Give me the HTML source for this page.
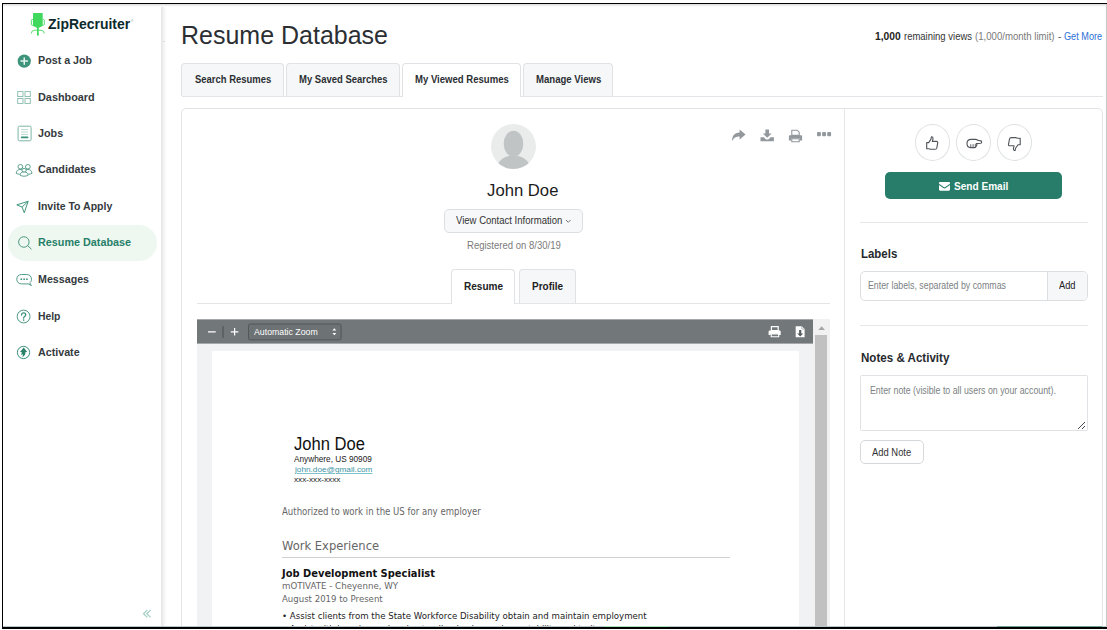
<!DOCTYPE html>
<html lang="en">
<head>
<meta charset="utf-8">
<title>Resume Database - ZipRecruiter</title>
<style>
*{box-sizing:border-box;margin:0;padding:0}
html,body{width:1107px;height:630px;overflow:hidden;background:#fff}
body{position:relative;font-family:"Liberation Sans",sans-serif;color:#333;font-size:11px}
.abs{position:absolute}
.t{position:absolute;white-space:nowrap;line-height:normal;transform-origin:0 0}
/* frame */
#f-top{left:2px;top:3px;width:1105px;height:1px;background:#000}
#f-top2{left:3px;top:4px;width:1103px;height:3px;background:linear-gradient(#d6d6d6,#f1f1f1 55%,#fff)}
#f-left{left:2px;top:3px;width:1px;height:626px;background:#000}
#f-bot{left:2px;top:627px;width:1105px;height:2px;background:#000}
#f-bot0{left:3px;top:626px;width:1103px;height:1px;background:#b9c6cb}
#f-right{left:1105.5px;top:4px;width:1.5px;height:623px;background:#c9c9c9}
#w-bot{left:0;top:629px;width:1107px;height:1px;background:#fff}
#w-top{left:0;top:0;width:1107px;height:3px;background:#fff}
#w-left{left:0;top:0;width:2px;height:630px;background:#fff}
#grn{left:604px;top:626px;width:65px;height:1px;background:#a9e3b8}
#chat{left:997px;top:626px;width:104.5px;height:1px;background:#6ea394}
/* sidebar */
#sb-shadow{left:161px;top:6px;width:6px;height:621px;background:linear-gradient(90deg,#e4e5e7,#f1f1f2 40%,#fafafa 70%,#fff)}
.ico{position:absolute;left:16.5px;width:15px;height:15px}
#pill{left:7.5px;top:224.7px;width:149.5px;height:36.3px;border-radius:18.2px;background:#eef8f1}
/* tabs */
.tab{position:absolute;top:63px;height:33px;border:1px solid #e0e2e5;border-bottom:none;border-radius:4px 4px 0 0;background:#f6f7f8}
.tab.on{background:#fff;height:34px}
#tabline{left:181.5px;top:96px;width:921.5px;height:1px;background:#e3e5e8}
/* card */
#card{left:181.2px;top:108.2px;width:921.8px;height:540px;border:1px solid #e1e3e6;border-radius:5px;background:#fff}
#vdiv{left:844px;top:109px;width:1px;height:520px;background:#e5e6e8}
/* profile */
#avatar{left:490.8px;top:124px;width:45px;height:45px;border-radius:50%;background:#eaecec;overflow:hidden}
#vci{left:444px;top:209px;width:138.7px;height:23.8px;border:1px solid #dcdfe2;border-radius:5px;background:#f7f8f9}
.rtab{position:absolute;top:269px;height:34px;border:1px solid #e0e2e5;border-bottom:none;border-radius:4px 4px 0 0;background:#f6f7f8}
.rtab.on{background:#fff;height:35px}
#rtabline{left:197px;top:303px;width:633px;height:1px;background:#e4e5e7}
/* pdf */
#pdf{left:197.4px;top:319px;width:632.6px;height:320px;background:#f1f2f4;overflow:hidden}
#ptool{left:0;top:0;width:616px;height:24px;background:#72777a}
#psel{left:51px;top:4.4px;width:93.6px;height:17px;border:1px solid #54595c;border-radius:2px;background:#6c7174}
#page{left:14.6px;top:32px;width:586.6px;height:300px;background:#fff}
#strack{left:616px;top:0;width:16.6px;height:320px;background:#f1f1f1}
#sthumb{left:617.9px;top:15.9px;width:11.6px;height:310px;background:#c1c1c1}
#rule{left:84.3px;top:238px;width:448.6px;height:1px;background:#d0d0d0}
/* right panel */
.circ{position:absolute;top:124.3px;width:35.4px;height:36.6px;border:1px solid #dfe2e4;border-radius:50%;background:#fff}
#send{left:885.3px;top:171.7px;width:176.7px;height:27.5px;border-radius:5px;background:#277d69}
.hr{position:absolute;left:859.7px;width:228px;height:1px;background:#e5e7ea}
#lblin{left:859.7px;top:271px;width:228px;height:30.2px;border:1px solid #dcdfe2;border-radius:5px;background:#fff;overflow:hidden}
#lbladd{left:186.5px;top:0;width:41px;height:30px;border-left:1px solid #dcdfe2;background:#f6f7f8}
#note{left:859.7px;top:375.2px;width:228px;height:56px;border:1px solid #e0e2e5;border-radius:1.5px;background:#fff}
#addnote{left:860px;top:440px;width:64px;height:23.6px;border:1px solid #d6d9dc;border-radius:5px;background:#fff}
</style>
</head>
<body>
<!-- sidebar -->
<div class="abs" id="sb-shadow"></div>
<div class="abs" id="pill"></div>
<div class="abs" style="left:162px;top:41px;width:3px;height:1px;background:#dddee1"></div>
<svg class="abs" style="left:29px;top:11px" width="18" height="27" viewBox="29 11 18 27">
  <g fill="#41d95d" stroke="none">
    <rect x="33" y="13" width="9.7" height="13.2" rx="0.6"/>
    <path d="M33 25.600h9.700l-3.500 2.200h-2.700z"/>
    <rect x="37" y="26" width="1.700" height="9"/>
    <circle cx="37.850" cy="34.800" r="1"/>
  </g>
  <g fill="none" stroke="#41d95d">
    <path d="M33 19.500h-0.800a0.800 0.800 0 0 0-0.800 0.800v4.100a0.800 0.800 0 0 0 0.800 0.800h0.800" stroke-width="0.900"/>
    <path d="M42.700 19.500h0.800a0.800 0.800 0 0 1 0.800 0.800v4.100a0.800 0.800 0 0 1-0.800 0.800h-0.800" stroke-width="0.900"/>
    <path d="M31.600 33.400v-1.200c0-1.300 2.800-2.100 6.200-2.100s6.200 0.800 6.200 2.100v1.200" stroke-width="1"/>
  </g>
</svg>
<svg class="abs" style="left:17px;top:54px" width="15" height="15" viewBox="0 0 15 15"><circle cx="7.250" cy="7.100" r="6.650" fill="#3d947b"/><path d="M7.250 3.900v6.400M4.050 7.100h6.400" stroke="#e6f2ee" stroke-width="1.500" stroke-linecap="round"/></svg>
<svg class="abs" style="left:17px;top:91px" width="15" height="14" viewBox="0 0 15 14" fill="none" stroke="#86baaa" stroke-width="0.900"><rect x="0.700" y="0.600" width="5.300" height="4.900"/><rect x="8" y="0.600" width="5.300" height="4.900"/><rect x="0.700" y="7.500" width="5.300" height="4.900"/><rect x="8" y="7.500" width="5.300" height="4.900"/></svg>
<svg class="ico" style="top:125px;height:17px" viewBox="0 0 15 17" fill="none" stroke="#7db5a4"><rect x="1.100" y="1.200" width="13" height="14.600" rx="1.400" stroke-width="1"/><path d="M4 4.600h7.200M4 7h7.200M4 9.400h7.200" stroke-width="0.800" stroke="#a9cfc3"/><path d="M4.600 12.400h6" stroke="#3a9179" stroke-width="1.600" stroke-linecap="round"/></svg>
<svg class="abs" style="left:14.800px;top:162.600px" width="18.200" height="14.300" viewBox="0 0 19 16" preserveAspectRatio="none" fill="none" stroke="#4f9a84" stroke-width="1"><circle cx="5.600" cy="4.200" r="2.500"/><circle cx="13.400" cy="4.200" r="2.500"/><path d="M1.300 11.600c0-2.600 1.600-4.400 4.300-4.400 1.200 0 2 .3 2.700.9M17.700 11.600c0-2.600-1.600-4.400-4.300-4.400-1.200 0-2 .3-2.700.9"/><path d="M1.300 11.600c1 .6 2.200.9 3.500.95M17.700 11.600c-1 .6-2.200.9-3.500.95"/><circle cx="9.500" cy="8.200" r="2.200" fill="#fff"/><path d="M5.200 13.600c0-2.300 1.700-3.500 4.300-3.500s4.300 1.200 4.300 3.500c-1.300.8-2.700 1.200-4.300 1.200s-3-.4-4.300-1.200z" fill="#fff"/></svg>
<svg class="abs" style="left:16.300px;top:199.800px" width="13.800" height="13.800" viewBox="0 0 15 15" fill="none" stroke="#3a9179" stroke-width="1.050" stroke-linejoin="round"><path d="M13.200 1.400L0.900 5.300l5.700 2.400 2.400 6.200z"/><path d="M13.200 1.400L6.600 7.700"/></svg>
<svg class="ico" style="top:235px;height:16px" viewBox="0 0 15 16" fill="none" stroke="#4f9a84" stroke-width="1"><circle cx="6.850" cy="7" r="5.250"/><path d="M10.700 10.700l3.600 3.300" stroke-linecap="round"/></svg>
<svg class="abs" style="left:15.600px;top:272.500px" width="17" height="15" viewBox="0 0 18 15" preserveAspectRatio="none" fill="none" stroke="#4f9a84" stroke-width="1"><path d="M5.800 1.500h5.600c3 0 5 2 5 4.700 0 1.600-.7 2.900-1.900 3.700l1.900 2.700-3.600-1.800c-.5.100-.9.100-1.400.1H5.800c-3 0-5-2-5-4.700s2-4.700 5-4.700z" stroke-linejoin="round"/><g fill="#3a9179" stroke="none"><circle cx="5.600" cy="6.200" r="0.900"/><circle cx="8.600" cy="6.200" r="0.900"/><circle cx="11.600" cy="6.200" r="0.900"/></g></svg>
<svg class="abs" style="left:16.100px;top:308.700px" width="15" height="15" viewBox="0 0 15 15" fill="none" stroke="#4f9a84" stroke-width="1"><circle cx="7.600" cy="7.500" r="6.400"/><path d="M5.500 6c0-1.300.9-2.100 2.100-2.100s2.100.8 2.100 1.900c0 1.600-2.100 1.600-2.100 3.300" stroke="#3a9179" stroke-width="1.300" stroke-linecap="round"/><circle cx="7.600" cy="11" r="0.850" fill="#3a9179" stroke="none"/></svg>
<svg class="abs" style="left:16.400px;top:344.900px" width="15" height="15" viewBox="0 0 15 15" fill="none" stroke="#3a9179" stroke-width="1"><circle cx="7.500" cy="7.500" r="6.150"/><path d="M7.700 2.500l3.500 4.500H9.500c.2 2.400-.9 4-3.300 5.200.7-1.200.9-2.300.6-3.300-.4.600-1 1-1.800 1.300.7-1.100.9-2.200.6-3.200H4z" fill="#2c8068" stroke="none"/></svg>
<svg class="abs" style="left:142px;top:609px" width="10" height="10" viewBox="0 0 10 10" fill="none" stroke="#a3cfc3" stroke-width="1.250"><path d="M5.300 1.100L1.500 4.750l3.800 3.650M8.600 1.100L4.800 4.750l3.800 3.650"/></svg>

<!-- top tabs -->
<div class="abs" id="tabline"></div>
<div class="tab" style="left:181.200px;width:102.500px"></div>
<div class="tab" style="left:286.200px;width:113.800px"></div>
<div class="tab on" style="left:402.300px;width:118.800px"></div>
<div class="tab" style="left:523.400px;width:89.300px"></div>

<!-- card -->
<div class="abs" id="card"></div>
<div class="abs" id="vdiv"></div>

<!-- profile header -->
<svg class="abs" style="left:730px;top:128px" width="104" height="16" viewBox="730 128 104 16" fill="#92989c">
  <path d="M739.600 129.600l6 4.900-6 4.900v-2.900c-3.600 0-5.800 1-7.400 4.700-.4-5 2.300-8.300 7.400-8.600z"/>
  <path d="M765.400 129.400h3.600v4h2.600l-4.400 4.400-4.400-4.400h2.600z"/>
  <path d="M760.500 137.300h3.400l1.600 1.600c.9.900 2.500.9 3.400 0l1.600-1.600h3.400v3.900h-13.400z"/>
  <path d="M791.800 130.200h5.400l2 2v3.200h-7.400z" fill="none" stroke="#92989c" stroke-width="1.100"/>
  <path d="M789.800 135.200h11.400c.5 0 .9.400.9.900v4.300h-2.400v-2.200h-8.400v2.200h-2.400v-4.300c0-.5.400-.9.900-.9z"/>
  <path d="M791.800 138.800h7.400v3h-7.400z" fill="none" stroke="#92989c" stroke-width="1.100"/>
  <rect x="817" y="132" width="3.900" height="4.300" rx="1"/><rect x="822.100" y="132" width="3.900" height="4.300" rx="1"/><rect x="827.200" y="132" width="3.900" height="4.300" rx="1"/>
</svg>
<div class="abs" id="avatar"><svg width="45" height="45" viewBox="0 0 45 45"><ellipse cx="22.500" cy="19.800" rx="9.800" ry="13" fill="#c0c4c4"/><path d="M5 48c0-9 6-14.500 12.500-16h10C34 33.500 40 39 40 48z" fill="#c0c4c4"/></svg></div>
<div class="abs" id="vci"></div>
<svg class="abs" style="left:565px;top:219px" width="7" height="5" viewBox="0 0 7 5" fill="none" stroke="#666" stroke-width="0.900"><path d="M1 1l2.300 2.300L5.600 1"/></svg>
<div class="abs" id="rtabline"></div>
<div class="rtab on" style="left:451px;width:64px"></div>
<div class="rtab" style="left:519px;width:57px"></div>

<!-- pdf viewer -->
<div class="abs" id="pdf">
  <div class="abs" id="page"></div>
  <div class="abs" id="rule"></div>
  <svg class="abs" style="left:0;top:0" width="617" height="26" viewBox="0 0 617 26"><rect x="0" y="0.400" width="616" height="24.200" fill="#72777a"/><rect x="51.500" y="5" width="92.600" height="15.900" rx="1.800" fill="#6d7275" stroke="#52575a" stroke-width="1"/></svg>
  
  <svg class="abs" style="left:8px;top:4px" width="140" height="18" viewBox="8 3.600 140 18">
    <path d="M11 12.400h7.700M33.800 12.400h7.600M37.600 8.600v7.600" stroke="#fff" stroke-width="1.200" fill="none"/>
    <path d="M26 6.600v11.800" stroke="#43484b" stroke-width="0.900"/>
    <path d="M135.400 11.200l1.950-2.300 1.950 2.300zM135.400 13.600l1.950 2.300 1.950-2.300z" fill="#fff"/>
  </svg>
  <svg class="abs" style="left:570px;top:5px" width="40" height="16" viewBox="570 4.600 40 16" fill="#fff">
    <path d="M574.400 7.200h6.800v4h-6.800z" fill="none" stroke="#fff" stroke-width="1.200"/>
    <path d="M572.500 11h10.300c.5 0 .9.400.9.900v3.700h-2v-1.300h-8.100v1.300h-2v-3.700c0-.5.400-.9.900-.9z"/>
    <path d="M574.200 14.500h7.500v2.800h-7.500z" fill="none" stroke="#fff" stroke-width="1.100"/>
    <path d="M598.700 6.800h6.100l2.800 2.800v8.200h-8.900z"/>
    <path d="M602.100 10.700h2.200v3.300h1.900l-3 3-3-3h1.900z" fill="#565b5f"/>
    <path d="M604.800 6.800v2.800h2.800" fill="none" stroke="#9a9fa2" stroke-width="0.700"/>
  </svg>
  <div class="abs" id="strack"></div>
  <div class="abs" id="sthumb"></div>
  <svg class="abs" style="left:620.300px;top:6px" width="8" height="6" viewBox="0 0 8 6"><path d="M0.300 5L3.650 1.300 7 5z" fill="#a5a5a5"/></svg>
</div>

<!-- right panel -->
<div class="circ" style="left:914.700px"></div>
<div class="circ" style="left:955.800px"></div>
<div class="circ" style="left:996.900px"></div>
<svg class="abs" style="left:920px;top:132px" width="106" height="22" viewBox="920 132 106 22" fill="none" stroke="#50555a" stroke-width="1.120" stroke-linejoin="round" stroke-linecap="round">
  <path d="M926.700 142.600h2l2.100-3.200c.5-.7.300-1.700.6-2.500.9-.2 1.600.5 1.600 1.600 0 1.200-.6 2.100-.7 2.900h4.200c.9 0 1.400.8 1.200 1.500l-.9 5.100c-.2.900-.8 1.300-1.700 1.300h-4.100c-.9 0-1.500-.5-2.300-.6h-2z"/>
  <path d="M967 143.600c0-2.400 1.600-4.200 4-4.200h5c1 0 1.600.9 2.600 1.100l2.200.4c1.200.2 1.200 2.200 0 2.400l-4.400.3c.8.800.6 2-.3 2.400.1.900-.6 1.600-1.500 1.600h-4c-2.200 0-3.600-1.700-3.600-4z"/>
  <path d="M970.800 144.600v3M973.100 144.600v3M975.300 144.200v2.700" stroke-width="0.900"/>
  <path d="M1020.200 144.700h-2.200l-2.300 3.300c-.5.700-.3 1.700-.6 2.500-.9.200-1.700-.5-1.700-1.700 0-1.200.6-2.200.7-3h-4.400c-.9 0-1.400-.8-1.200-1.500l1-5.300c.2-.9.800-1.400 1.700-1.400h4.400c.9 0 1.600.6 2.400.7h2.200z"/>
</svg>
<div class="abs" id="send"></div>
<svg class="abs" style="left:939px;top:181.500px" width="11" height="9" viewBox="0 0 11 9" fill="#fff"><path d="M0 1.200C0 .5.500 0 1.200 0h8.600c.7 0 1.200.5 1.200 1.200v.5L6.300 4.900c-.5.300-1.100.3-1.600 0L0 1.700z"/><path d="M0 3.100l4.300 2.900c.7.500 1.700.5 2.400 0L11 3.100v4.500c0 .7-.5 1.200-1.200 1.200H1.200C.5 8.800 0 8.300 0 7.600z"/></svg>
<div class="hr" style="top:222px"></div>
<div class="abs" id="lblin"><div class="abs" id="lbladd"></div></div>
<div class="hr" style="top:325px"></div>
<div class="abs" id="note"></div>
<svg class="abs" style="left:1077px;top:421px" width="9" height="9" viewBox="0 0 9 9" stroke="#333" stroke-width="0.900"><path d="M1 8L8 1M5 8l3-3"/></svg>
<div class="abs" id="addnote"></div>

<div class="t" style='left:48.20px;top:14.60px;font-size:15.0px;font-weight:700;color:#0c2a2d;transform:scaleX(0.9298);'>ZipRecruiter</div>
<div class="t" style='left:130.90px;top:18.60px;font-size:3.2px;color:#7d8f90;'>&#174;</div>
<div class="t" style='left:38.30px;top:54.40px;font-size:11.0px;font-weight:700;color:#343a3e;transform:scaleX(0.9731);'>Post a Job</div>
<div class="t" style='left:38.30px;top:90.80px;font-size:11.0px;font-weight:700;color:#343a3e;transform:scaleX(0.9870);'>Dashboard</div>
<div class="t" style='left:38.10px;top:127.10px;font-size:11.0px;font-weight:700;color:#343a3e;transform:scaleX(0.9782);'>Jobs</div>
<div class="t" style='left:38.10px;top:163.40px;font-size:10.86px;font-weight:700;color:#343a3e;transform:scaleX(0.9916);'>Candidates</div>
<div class="t" style='left:38.30px;top:200.00px;font-size:11.0px;font-weight:700;color:#343a3e;transform:scaleX(0.9569);'>Invite To Apply</div>
<div class="t" style='left:38.30px;top:236.40px;font-size:11.0px;font-weight:700;color:#277f68;transform:scaleX(0.9826);'>Resume Database</div>
<div class="t" style='left:38.30px;top:272.80px;font-size:11.0px;font-weight:700;color:#343a3e;transform:scaleX(0.9701);'>Messages</div>
<div class="t" style='left:38.30px;top:309.50px;font-size:10.86px;font-weight:700;color:#343a3e;transform:scaleX(0.9540);'>Help</div>
<div class="t" style='left:38.10px;top:345.70px;font-size:10.86px;font-weight:700;color:#343a3e;transform:scaleX(0.9855);'>Activate</div>
<div class="t" style='left:181.21px;top:19.90px;font-size:26.52px;color:#2b2f33;transform:scaleX(0.9425);'>Resume Database</div>
<div class="t" style='left:875.20px;top:29.50px;font-size:10.57px;font-weight:700;color:#222;transform:scaleX(0.9715);'>1,000</div>
<div class="t" style='left:904.30px;top:30.50px;font-size:10.43px;color:#333;transform:scaleX(0.9100);'>remaining views</div>
<div class="t" style='left:975.40px;top:30.50px;font-size:10.43px;color:#7a7a7a;transform:scaleX(0.9216);'>(1,000/month limit)</div>
<div class="t" style='left:1058.00px;top:30.50px;font-size:10px;color:#555;'>-</div>
<div class="t" style='left:1063.90px;top:30.50px;font-size:10.43px;color:#2b6fd6;transform:scaleX(0.8776);'>Get More</div>
<div class="t" style='left:194.70px;top:73.10px;font-size:11.43px;font-weight:700;color:#2b2f33;transform:scaleX(0.8276);'>Search Resumes</div>
<div class="t" style='left:298.60px;top:73.10px;font-size:11.43px;font-weight:700;color:#2b2f33;transform:scaleX(0.8305);'>My Saved Searches</div>
<div class="t" style='left:414.70px;top:73.10px;font-size:11.43px;font-weight:700;color:#2b2f33;transform:scaleX(0.8363);'>My Viewed Resumes</div>
<div class="t" style='left:535.70px;top:73.10px;font-size:11.43px;font-weight:700;color:#2b2f33;transform:scaleX(0.8385);'>Manage Views</div>
<div class="t" style='left:487.10px;top:180.60px;font-size:16.67px;color:#1c1c1c;'>John Doe</div>
<div class="t" style='left:455.80px;top:214.20px;font-size:11.01px;color:#333;transform:scaleX(0.8664);'>View Contact Information</div>
<div class="t" style='left:466.50px;top:240.40px;font-size:10.29px;color:#7a7a7a;transform:scaleX(0.9265);'>Registered on 8/30/19</div>
<div class="t" style='left:464.10px;top:279.90px;font-size:10.71px;font-weight:700;color:#222;transform:scaleX(0.9379);'>Resume</div>
<div class="t" style='left:531.70px;top:279.90px;font-size:10.71px;font-weight:700;color:#222;transform:scaleX(0.9324);'>Profile</div>
<div class="t" style='left:253.70px;top:326.40px;font-size:9.86px;color:#fff;transform:scaleX(0.8885);'>Automatic Zoom</div>
<div class="t" style='left:294.30px;top:433.90px;font-size:17.68px;color:#111;transform:scaleX(0.9377);'>John Doe</div>
<div class="t" style='left:294.30px;top:454.20px;font-size:8.55px;color:#222;transform:scaleX(0.9640);'>Anywhere, US 90909</div>
<div class="t" style='left:294.72px;top:465.00px;font-size:8.1px;color:#3d93a3;transform:scaleX(1.0167);text-decoration:underline;text-decoration-color:#7fc4cc;text-decoration-thickness:1px;text-underline-offset:1px;'>john.doe@gmail.com</div>
<div class="t" style='left:294.30px;top:474.60px;font-size:8.1px;color:#222;transform:scaleX(1.0106);'>xxx-xxx-xxxx</div>
<div class="t" style='left:282.00px;top:505.80px;font-size:9.86px;color:#666;font-family:"DejaVu Sans",sans-serif;transform:scaleX(0.8689);'>Authorized to work in the US for any employer</div>
<div class="t" style='left:282.00px;top:538.90px;font-size:12.05px;color:#666;font-family:"DejaVu Sans",sans-serif;transform:scaleX(0.9564);'>Work Experience</div>
<div class="t" style='left:282.49px;top:566.70px;font-size:11.1px;font-weight:700;color:#111;font-family:"DejaVu Sans",sans-serif;transform:scaleX(0.8921);'>Job Development Specialist</div>
<div class="t" style='left:282.00px;top:580.00px;font-size:9.59px;color:#666;font-family:"DejaVu Sans",sans-serif;transform:scaleX(0.9040);'>mOTIVATE - Cheyenne, WY</div>
<div class="t" style='left:282.00px;top:592.50px;font-size:9.59px;color:#666;font-family:"DejaVu Sans",sans-serif;transform:scaleX(0.8943);'>August 2019 to Present</div>
<div class="t" style='left:281.70px;top:610.00px;font-size:9.59px;color:#222;font-family:"DejaVu Sans",sans-serif;transform:scaleX(0.8990);'>&#8226; Assist clients from the State Workforce Disability obtain and maintain employment</div>
<div class="t" style='left:281.72px;top:623.20px;font-size:9.59px;color:#222;font-family:"DejaVu Sans",sans-serif;transform:scaleX(0.8777);'>&#8226; Assist with learning and understanding business plans, stability and traits</div>
<div class="t" style='left:954.00px;top:179.70px;font-size:11.14px;font-weight:700;color:#fff;transform:scaleX(0.9051);'>Send Email</div>
<div class="t" style='left:860.60px;top:247.30px;font-size:12.29px;font-weight:700;color:#25292d;transform:scaleX(0.9315);'>Labels</div>
<div class="t" style='left:868.10px;top:279.20px;font-size:10.58px;color:#7b7f83;transform:scaleX(0.8319);'>Enter labels, separated by commas</div>
<div class="t" style='left:1058.90px;top:279.20px;font-size:10.87px;color:#222;transform:scaleX(0.8557);'>Add</div>
<div class="t" style='left:860.60px;top:351.00px;font-size:12.57px;font-weight:700;color:#25292d;transform:scaleX(0.9217);'>Notes &amp; Activity</div>
<div class="t" style='left:869.90px;top:384.90px;font-size:10.29px;color:#7b7f83;transform:scaleX(0.8562);'>Enter note (visible to all users on your account).</div>
<div class="t" style='left:871.90px;top:445.80px;font-size:11.01px;color:#333;transform:scaleX(0.8547);'>Add Note</div>

<!-- frame -->
<div class="abs" id="f-bot0"></div>
<div class="abs" id="grn"></div>
<div class="abs" id="chat"></div>
<div class="abs" id="w-bot"></div><div class="abs" id="w-top"></div><div class="abs" id="w-left"></div>
<div class="abs" id="f-top2"></div>
<div class="abs" id="f-top"></div>
<div class="abs" id="f-left"></div>
<div class="abs" id="f-bot"></div>
<div class="abs" id="f-right"></div>

</body>
</html>
